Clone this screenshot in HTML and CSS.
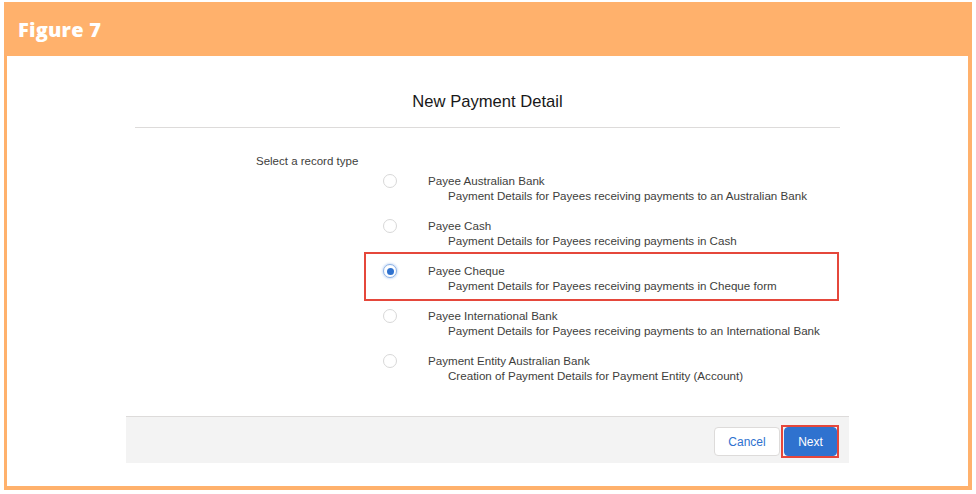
FILE: index.html
```html
<!DOCTYPE html>
<html>
<head>
    <link rel="stylesheet" href="styles.css">
</head>
<body>

    <div class="figure">
        <div class="figure-header">
            <h1>Figure 7</h1>
        </div>

        <div class="panel">
            <div class="modal">
                <h2 class="modal-title">New Payment Detail</h2>
                <div class="divider"></div>

                <div class="record-types">
                    <div class="record-label">Select a record type</div>
                    <div class="options">
                        <div class="option">
                            <span class="radio"></span>
                            <div class="option-text">
                                <div class="option-name">Payee Australian Bank</div>
                                <div class="option-desc">Payment Details for Payees receiving payments to an Australian Bank</div>
                            </div>
                        </div>
                        <div class="option">
                            <span class="radio"></span>
                            <div class="option-text">
                                <div class="option-name">Payee Cash</div>
                                <div class="option-desc">Payment Details for Payees receiving payments in Cash</div>
                            </div>
                        </div>
                        <div class="option highlight">
                            <span class="radio checked"></span>
                            <div class="option-text">
                                <div class="option-name">Payee Cheque</div>
                                <div class="option-desc">Payment Details for Payees receiving payments in Cheque form</div>
                            </div>
                        </div>
                        <div class="option">
                            <span class="radio"></span>
                            <div class="option-text">
                                <div class="option-name">Payee International Bank</div>
                                <div class="option-desc">Payment Details for Payees receiving payments to an International Bank</div>
                            </div>
                        </div>
                        <div class="option">
                            <span class="radio"></span>
                            <div class="option-text">
                                <div class="option-name">Payment Entity Australian Bank</div>
                                <div class="option-desc">Creation of Payment Details for Payment Entity (Account)</div>
                            </div>
                        </div>
                    </div>
                </div>

                <div class="modal-footer">
                    <button class="btn btn-cancel">Cancel</button>
                    <span class="next-mark">
                        <button class="btn btn-next">Next</button>
                    </span>
                </div>
            </div>
        </div>
    </div>

</body>
</html>
```

FILE: styles.css
```css
body {
    margin: 0;
    background-color: white;
    font-family: "Liberation Sans", Arial, sans-serif;
}

.figure {
    box-sizing: border-box;
    width: 968px;
    margin: 2px 4px 0 4px;
    padding: 0 4px 4px 3px;
    background-color: #ffb16c;
}

.figure-header {
    height: 54px;
    display: flex;
    align-items: center;
}

.figure-header h1 {
    margin: 0 0 0 11px;
    color: white;
    font-family: "Open Sans", sans-serif;
    font-weight: 800;
    font-size: 20px;
    letter-spacing: 0.2px;
}

.panel {
    height: 430px;
    background-color: white;
}

.modal {
    width: 723px;
    margin: 0 auto;
    padding-top: 36px;
}

.modal-title {
    margin: 0;
    text-align: center;
    font-weight: normal;
    font-size: 16.6px;
    line-height: 20px;
    color: #181818;
}

.divider {
    margin: 15px 9px 0 9px;
    border-top: 1px solid #dddbda;
}

.record-types {
    display: flex;
    padding: 25px 0 0 130px;
}

.record-label {
    width: 110px;
    font-size: 11.5px;
    line-height: 16px;
    color: #3e3e3c;
}

.options {
    padding-top: 11px;
    width: 471px;
}

.option {
    display: flex;
    height: 45px;
    box-sizing: border-box;
    padding: 9px 0 0 17px;
}

.option.highlight {
    outline: 2px solid #e5473b;
}

.radio {
    box-sizing: border-box;
    width: 14px;
    height: 14px;
    margin-top: 1px;
    border: 1px solid #d8d8d8;
    border-radius: 50%;
    background-color: white;
}

.radio.checked {
    border-color: #8db2e6;
    box-shadow: 0 0 2px 1px #d3e2f7;
    position: relative;
}

.radio.checked::after {
    content: "";
    position: absolute;
    left: 2.5px;
    top: 2.5px;
    width: 7px;
    height: 7px;
    border-radius: 50%;
    background-color: #2f72cf;
}

.option-text {
    margin-left: 31px;
    font-size: 11.6px;
    line-height: 15px;
    color: #3e3e3c;
}

.option-desc {
    padding-left: 20px;
}

.modal-footer {
    display: flex;
    justify-content: flex-end;
    align-items: flex-start;
    gap: 1px;
    margin-top: 27px;
    height: 47px;
    box-sizing: border-box;
    padding: 8px 10px 0 0;
    background-color: #f3f3f3;
    border-top: 1px solid #dddbda;
}

.btn {
    height: 29px;
    border-radius: 4px;
    font-family: "Liberation Sans", Arial, sans-serif;
    font-size: 12px;
    padding: 0;
}

.btn-cancel {
    width: 66px;
    margin-top: 2px;
    background-color: white;
    border: 1px solid #dddbda;
    color: #2f72cf;
}

.next-mark {
    display: flex;
    padding-left: 1px;
    border: 2px solid #e5473b;
}

.btn-next {
    width: 53px;
    background-color: #2f72cf;
    border: 1px solid #2f72cf;
    color: white;
}
```
